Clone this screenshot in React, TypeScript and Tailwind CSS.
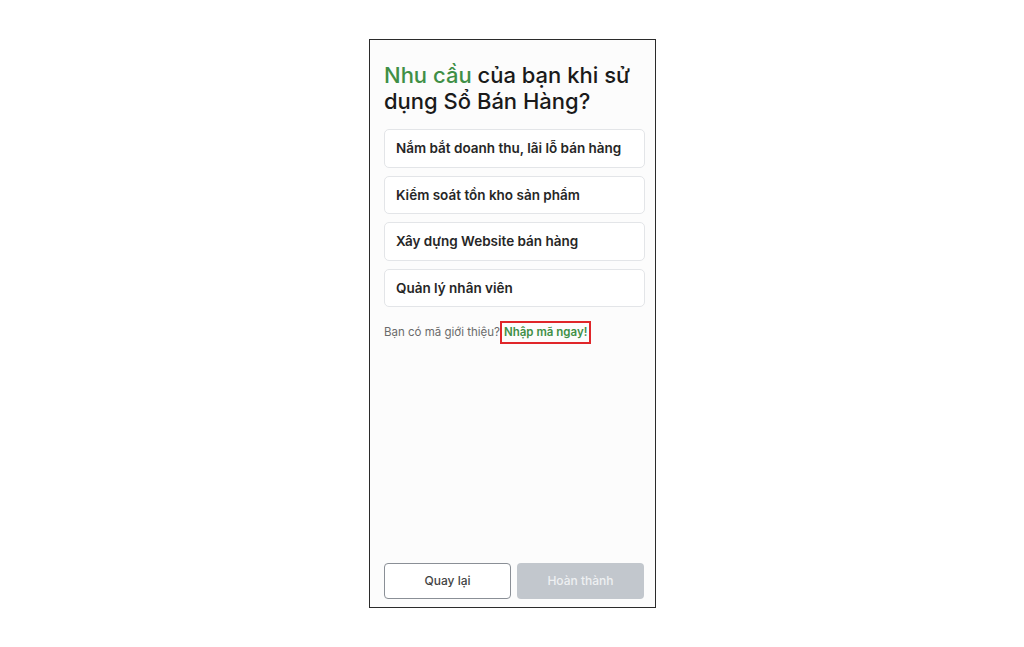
import React from "react";

const options = [
  "Nắm bắt doanh thu, lãi lỗ bán hàng",
  "Kiểm soát tồn kho sản phẩm",
  "Xây dựng Website bán hàng",
  "Quản lý nhân viên",
];

export default function App() {
  return (
    <div
      className="w-[1024px] h-[647px] bg-white pl-[369px] pt-[39px]"
      style={{ fontFamily: "Inter, 'Noto Sans', Arial, sans-serif" }}
    >
      <div className="w-[287px] h-[569px] border border-[#2b2b2b] bg-[#fcfcfc] flex flex-col">
        <div className="pl-[14px] pr-[10px] pt-[22px]">
          <h1 className="text-[22px] leading-[26px] font-medium text-[#1a1a1a]">
            <span className="text-[#3f8f46]">Nhu cầu</span> của bạn khi sử dụng Sổ Bán Hàng?
          </h1>
          <div className="mt-[15px] flex flex-col gap-[8px]">
            {options.map((o) => (
              <div
                key={o}
                className="h-[38.5px] rounded-[5px] border border-[#e3e5e8] bg-white flex items-center px-[11px] text-[13.5px] font-semibold text-[#262626]"
              >
                {o}
              </div>
            ))}
          </div>
          <div className="mt-[14px] flex items-center text-[11.5px] text-[#6b6b6b]">
            <span>Bạn có mã giới thiệu?</span>
            <span className="border-2 border-[#e0262a] px-[2px] h-[23px] flex items-center font-semibold text-[#3f8f46]">
              Nhập mã ngay!
            </span>
          </div>
        </div>
        <div className="mt-auto pl-[14px] pr-[10px] pb-[8px] flex gap-[6px]">
          <button className="w-[127px] h-[36px] rounded-[4px] border border-[#8a8f96] bg-white text-[12px] font-medium text-[#444]">
            Quay lại
          </button>
          <button className="w-[127px] h-[36px] rounded-[4px] bg-[#c2c7cd] text-[12px] font-medium text-[#eef0f2]">
            Hoàn thành
          </button>
        </div>
      </div>
    </div>
  );
}
